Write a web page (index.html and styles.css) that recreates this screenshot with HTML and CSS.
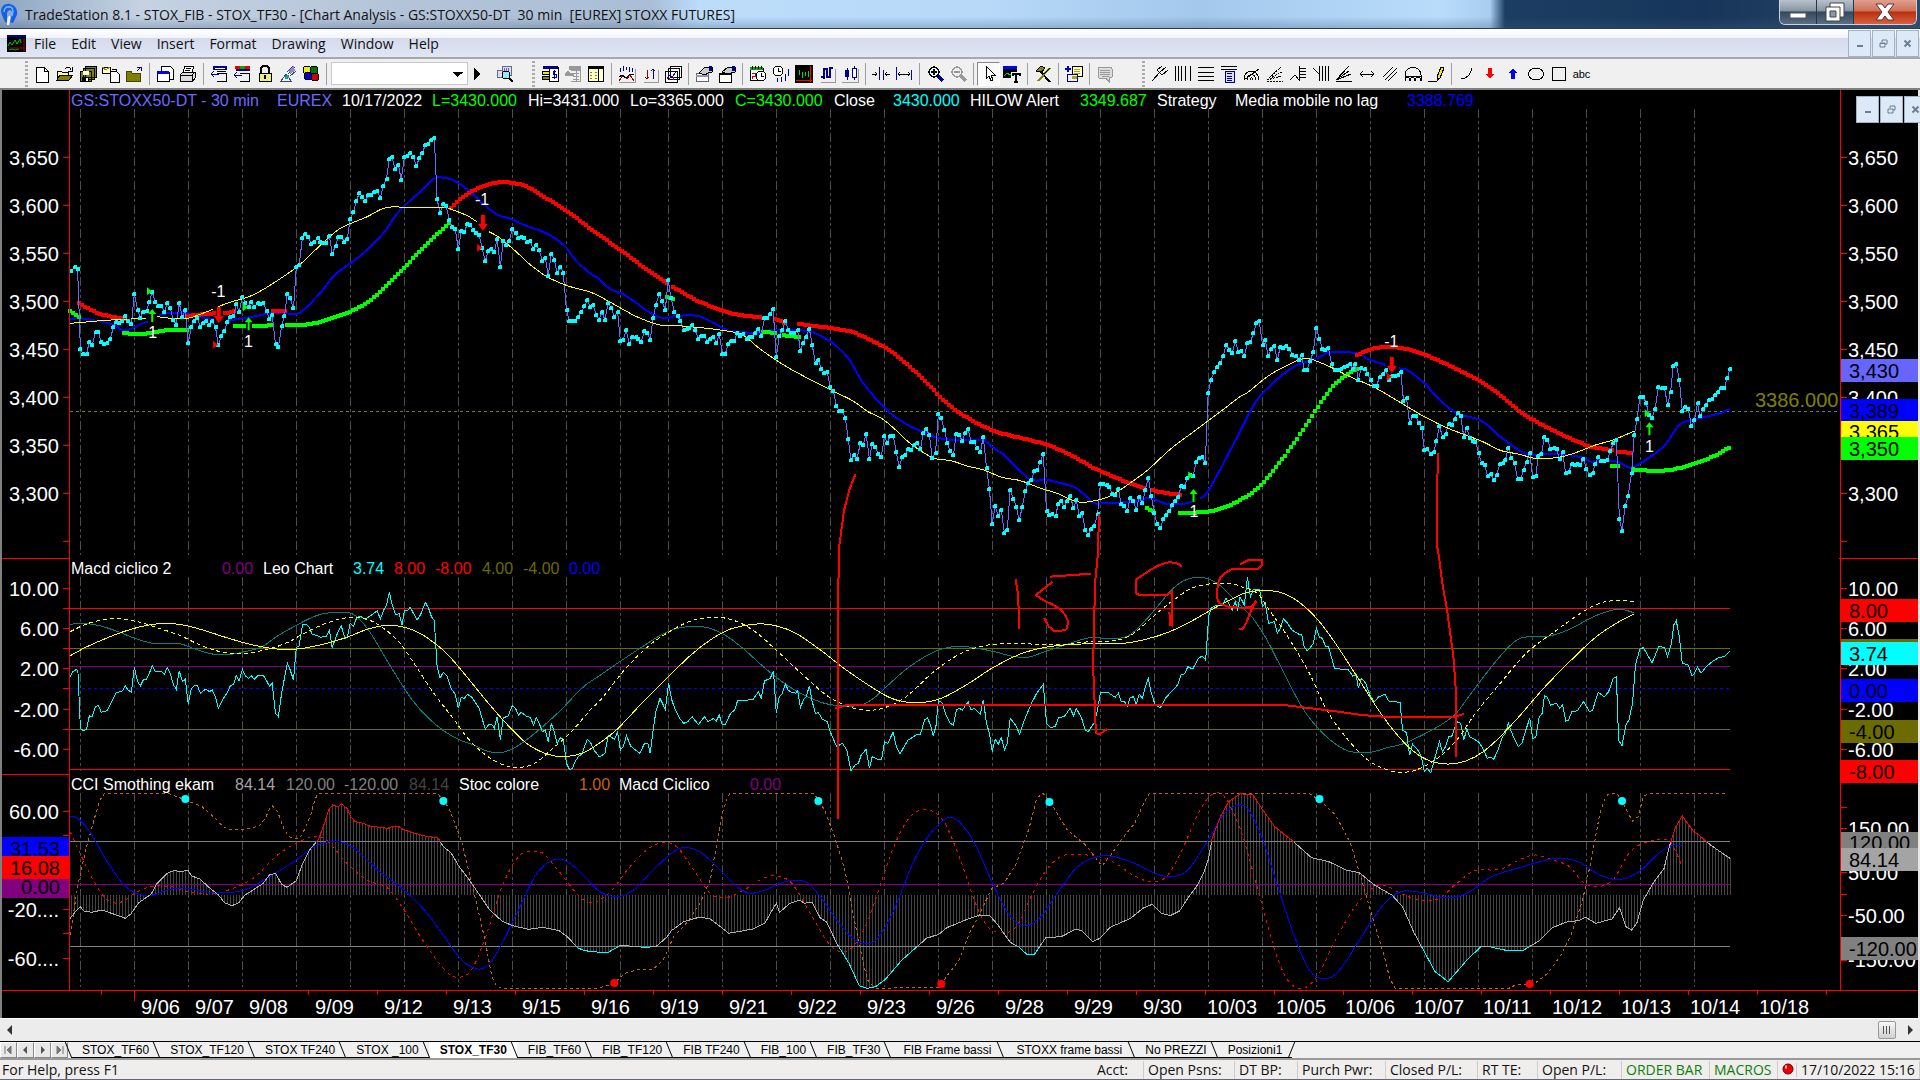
FILE: index.html
```html
<!DOCTYPE html>
<html lang="en">
<head>
<meta charset="utf-8">
<title>TradeStation 8.1 - STOX_FIB - STOX_TF30</title>
<link rel="stylesheet" href="styles.css">
</head>
<body>
<header class="titlebar">
  <svg class="logo" viewBox="0 0 18 26"><path d="M2 14C-1 7 4 2 10 3c6 1 9 8 6 13l-3 6-4-1 3-7c1-5-3-7-5-2v5l1 5-3-1z" fill="#1560e8"/><path d="M4 11c0-4 3-6 6-5M8 6c5-1 6 4 4 9" stroke="#6db6ff" stroke-width="1.500" fill="none"/><path d="M7 24c0-5 0-8 2-9s2 3 0 9z" fill="#eef6ff"/></svg>
  <h1 class="title">TradeStation 8.1 - STOX_FIB - STOX_TF30 - [Chart Analysis - GS:STOXX50-DT&nbsp; 30 min&nbsp; [EUREX] STOXX FUTURES]</h1>
  <div class="winbtns">
    <button class="wb" aria-label="Minimize"><svg width="18" height="16"><rect x="1" y="9" width="16" height="5" fill="#fff" stroke="#555"/></svg></button>
    <button class="wb" aria-label="Restore"><svg width="20" height="20"><path d="M5 1h14v14H5z" fill="#fff" stroke="#444"/><path d="M1 5h14v14H1z" fill="#fff" stroke="#444"/><path d="M5 9h6v6H5z" fill="#8a98a8" stroke="#444"/></svg></button>
    <button class="wb close" aria-label="Close"><svg width="20" height="18"><path d="M1 1h6l3 4 3-4h6l-6 8 6 8h-6l-3-4-3 4H1l6-8z" fill="#fff" stroke="#5a3030"/></svg></button>
  </div>
</header>
<nav class="menubar">
  <svg class="doc-icon" viewBox="0 0 19 17"><path fill="#000" d="M0 0h19v17H0z"/><path fill="#0000a8" d="M0 0h19v2H0z"/><path d="M1 11l2-4 2 3 3-5 2 4 3-5 1 4" stroke="#0c0" fill="none"/><path d="M1 13h17M17 3v13" stroke="#a00"/><path d="M2 15l3-1 3 1 4-1" stroke="#0a0" fill="none"/></svg>
  <a href="#">File</a><a href="#">Edit</a><a href="#">View</a><a href="#">Insert</a><a href="#">Format</a><a href="#">Drawing</a><a href="#">Window</a><a href="#">Help</a>
  <div class="mdi">
    <button aria-label="Minimize chart"><svg width="9" height="9"><path d="M2 7h6" stroke="#6b7f94" stroke-width="2"/></svg></button>
    <button aria-label="Restore chart"><svg width="9" height="9"><path d="M3 3V1h5v4H6M1 4h5v4H1zM1 4.500h5" stroke="#6b7f94" fill="none"/></svg></button>
    <button aria-label="Close chart"><svg width="9" height="9"><path d="M1.500 1.500l6 6m0-6l-6 6" stroke="#6b7f94" stroke-width="2"/></svg></button>
  </div>
</nav>
<div class="toolbar">
  <i class="grip"></i>
  <button aria-label="New"><svg><path d="M3 2h8l4 4v11H3z" fill="#fff" stroke="#000"/><path d="M11 2v4h4" fill="none" stroke="#000"/></svg></button>
  <button aria-label="Open"><svg><path d="M1 15V6h4l1 1h6v3" fill="#ff9" stroke="#000"/><path d="M1 15l3-5h13l-4 5z" fill="#808000" stroke="#000"/><path d="M9 4c2-3 5-2 6 1m1-3v4h-4" fill="none" stroke="#000"/></svg></button>
  <button aria-label="Save all"><svg><path d="M6 1h11v11H6zM4 3h11v11H4zM1 6h11v10H1z" fill="#808000" stroke="#000"/><path fill="#fff" d="M4 6h6v4H4z"/><path fill="#000" d="M3 12h7v4H3z"/><path fill="#fff" d="M7 13h2v3H7z"/></svg></button>
  <button aria-label="Import"><svg><path d="M8 6h6l3 3v8H8z" fill="#fff" stroke="#000"/><path d="M0 2h8v6H0z" fill="#ffc" stroke="#000"/><path d="M0 2l4 3 4-3" fill="none" stroke="#880"/><path d="M10 4h4v3" fill="none" stroke="#000"/></svg></button>
  <button aria-label="Close workspace"><svg><path d="M1 6h5l1 2h8v8H1z" fill="#808000" stroke="#440"/><path d="M12 6l4-4m-4 0h4v4" fill="none" stroke="#008"/></svg></button>
  <i class="sep"></i>
  <button aria-label="Window list"><svg><path d="M5 1h9l3 3v10H5z" fill="#fff" stroke="#000"/><path d="M1 7h12v9H1z" fill="#fff" stroke="#000"/><path fill="#00f" d="M1 6h12v3H1z"/></svg></button>
  <button aria-label="Print"><svg><path d="M6 1h9l-2 6H4z" fill="#fff" stroke="#000"/><path d="M1 10l3-3h12v6l-2 3H1z" fill="#ddd" stroke="#000"/><path d="M1 10h12v6M13 10l3-3M7 3h5M6 5h5" fill="none" stroke="#000"/></svg></button>
  <i class="sep"></i>
  <button aria-label="Insert analysis"><svg><path fill="#008" d="M3 1h14v4H3z"/><path fill="#fff" d="M5 3h10v1H5z"/><path d="M7 8h9v8H7M7 6l9 1" fill="none" stroke="#000"/><path d="M1 9h8M1 9l3-3M1 9l3 3" stroke="#008" fill="none"/></svg></button>
  <button aria-label="Insert strategy"><svg><path fill="#e00" d="M2 1h5v3H2z"/><path fill="#0a0" d="M7 1h5v3H7z"/><path fill="#e00" d="M12 1h5v3h-5z"/><path fill="#008" d="M3 4h14v2H3z"/><path d="M7 8h9v8H7" fill="none" stroke="#000"/><path d="M1 10h8M1 10l3-3M1 10l3 3" stroke="#008" fill="none"/></svg></button>
  <button aria-label="Lock"><svg><path d="M5 8V4c0-4 8-4 8 0v4" fill="none" stroke="#000" stroke-width="2"/><path d="M3 8h12v8H3z" fill="#ee8" stroke="#000"/><path fill="#000" d="M8 10h2v4H8z"/></svg></button>
  <button aria-label="Data feed"><svg><path d="M2 16l5-7 5 7zM16 2L9 9M14 1l-6 6M17 6l-6 5" fill="none" stroke="#446"/><path fill="#88c" d="M10 5l5-4 1 5-5 3z"/><circle cx="8" cy="12" r="2" fill="#0a8"/></svg></button>
  <button aria-label="Development"><svg><circle cx="5" cy="5" r="4" fill="#ee0" stroke="#000"/><circle cx="12" cy="5" r="4" fill="#070" stroke="#000"/><circle cx="6" cy="11" r="4" fill="#00c" stroke="#000"/><circle cx="13" cy="12" r="4" fill="#c00" stroke="#000"/></svg></button>
  <i class="sep"></i>
  <select class="symbol" aria-label="Symbol"><option></option></select>
  <button class="go" aria-label="Go"><svg><path d="M6 3l6 6-6 6z" fill="#000"/></svg></button>
  <button class="find" aria-label="Symbol lookup"><svg><path d="M1 5h5v7H1zM6 1h9v9H6z" fill="#dde" stroke="#669"/><path d="M8 3v5m2-5v5m2-5v5" stroke="#669"/><circle cx="10" cy="10" r="4" fill="#8ef" stroke="#000"/><path d="M13 13l4 4" stroke="#000" stroke-width="2"/></svg></button>
  <i class="grip grip-b"></i>
  <button aria-label="Trade bar"><svg><path d="M2 2h15v14H8V2" fill="#fff" stroke="#000"/><path fill="#008" d="M2 1h15v3H2z"/><ellipse cx="5" cy="8" rx="4" ry="2" fill="#ee0" stroke="#000"/><ellipse cx="5" cy="13" rx="4" ry="2" fill="#880" stroke="#000"/><path d="M15 6h-3v3h3v3h-4m2-7v9" fill="none" stroke="#00a"/></svg></button>
  <button aria-label="Order list"><svg><path fill="#999" d="M5 1h12v4H5zM1 8l3-3 2 3h4v3H1z"/><path d="M7 5h9v11H7M9 8h6m-6 3h6m-6 3h6M12 5v11" fill="none" stroke="#999"/></svg></button>
  <button aria-label="Account manager"><svg><path d="M1 3h15v13H1z" fill="#ffc" stroke="#000"/><path fill="#000" d="M1 1h16v3H1zM11 4h1v12h-1z"/><path d="M3 7h2m-2 3h2m-2 3h2m3-6h2m-2 3h2m-2 3h2" stroke="#880"/></svg></button>
  <i class="sep"></i>
  <button aria-label="Analysis technique"><svg><path d="M1 16l4-6 4 4 3-4 4 6" fill="none" stroke="#900"/><path d="M1 12l3-2 4 3 4-4 4 1" fill="none" stroke="#000"/><path d="M2 7V3m3 3V1m3 4V2m3 5V2m3 5V3" stroke="#009"/><path d="M1 17h16V4" fill="none" stroke="#999"/></svg></button>
  <button aria-label="Strategy"><svg><path d="M6 5v9m-2-2l2 2 2-2" fill="none" stroke="#900"/><path d="M12 14V4m-2 2l2-2 2 2" fill="none" stroke="#009"/><path d="M3 17h14V5" fill="none" stroke="#999"/></svg></button>
  <button aria-label="Workspace"><svg><path d="M6 1h11v11H6zM4 3h11v11H4zM1 6h12v11H1z" fill="#fff" stroke="#000"/><path d="M3 14l3-4 2 2 4-5" stroke="#00c" fill="none"/><path d="M5 15v-2m4 2v-3" stroke="#c00"/></svg></button>
  <i class="sep"></i>
  <button aria-label="Format window"><svg><path d="M1 8h12v8H1z" fill="#fff" stroke="#667"/><path fill="#99a" d="M1 10h12v2H1z"/><path d="M4 8l6-6h7v5l-4 1-3 2z" fill="#ccc" stroke="#000"/><path fill="#008" d="M14 1h3v5h-3z"/></svg></button>
  <button aria-label="Format symbol"><svg><path d="M1 8h12v9H1z" fill="#fff" stroke="#000"/><path fill="#000" d="M1 8h12v2H1z"/><path d="M4 7l6-5h7v5l-4 1-3 1z" fill="#ccc" stroke="#000"/><path fill="#008" d="M14 1h3v5h-3z"/></svg></button>
  <i class="sep"></i>
  <button aria-label="Calendar"><svg><path d="M1 3h13v12H1z" fill="#fff" stroke="#000"/><path fill="#0a0" d="M1 2h13v3H1z"/><path d="M3 1v3m3-3v3m3-3v3m3-3v3" stroke="#000"/><circle cx="12" cy="11" r="5" fill="#fff" stroke="#000"/><path d="M12 8v3h3" fill="none" stroke="#000"/><path d="M3 8h3v3H3v3" stroke="#c00" fill="none"/></svg></button>
  <button aria-label="Bar interval"><svg><circle cx="6" cy="6" r="5" fill="#fff" stroke="#000"/><path d="M6 3v3h3" fill="none" stroke="#000"/><path d="M5.500 13v4m4-5v5m4-8v7m3-12v7" stroke="#009"/></svg></button>
  <button aria-label="Chart"><svg><path fill="#000" d="M0 0h18v18H0z"/><path d="M4 5v5m3-3v6m3-6v4m3-5v6" stroke="#0d0"/><path d="M1 15h16M15.500 1v16" stroke="#f00"/></svg></button>
  <button aria-label="Bar chart"><svg><path d="M3 12h3V4h3v8h3V3h3M6 12v2m6-11v10" fill="none" stroke="#008" stroke-width="1.500"/><path d="M3 17h14V4" fill="none" stroke="#999"/></svg></button>
  <button aria-label="Candlestick"><svg><path d="M6 3v12m7-14v14" stroke="#008"/><path d="M4 5h4v7H4z" fill="#008"/><path d="M11 3h4v9h-4z" fill="#fff" stroke="#008"/><path d="M1 17h16V4" fill="none" stroke="#999"/></svg></button>
  <i class="sep"></i>
  <button aria-label="Decrease spacing"><svg><path d="M7.500 2v13m4-10v10" stroke="#00c"/><path d="M0 9h5m-2-2l2 2-2 2m15-2h-5m2-2l-2 2 2 2" stroke="#000" fill="none"/></svg></button>
  <button aria-label="Increase spacing"><svg><path d="M1.500 2v13m15-10v10" stroke="#00c"/><path d="M3 9h12M5 7L3 9l2 2m8-4l2 2-2 2" stroke="#000" fill="none"/></svg></button>
  <i class="sep"></i>
  <button aria-label="Zoom in"><svg><circle cx="8" cy="7" r="5" fill="#dff" stroke="#000" stroke-width="1.500"/><path d="M12 11l5 5" stroke="#008" stroke-width="3"/><path d="M5 7h6M8 4v6" stroke="#000" stroke-width="2"/></svg></button>
  <button aria-label="Zoom out"><svg><circle cx="8" cy="7" r="5" fill="#eee" stroke="#999" stroke-width="1.500"/><path d="M12 11l5 5" stroke="#999" stroke-width="3"/><path d="M5 7h6" stroke="#999" stroke-width="2"/></svg></button>
  <i class="sep"></i>
  <button class="pressed" aria-label="Pointer"><svg><path d="M6 1v13l3-3 2 5 2-1-2-5h4z" fill="#fff" stroke="#000"/></svg></button>
  <button aria-label="Chart text"><svg><path fill="#000" d="M0 1h14v12H0z"/><path fill="#00f" d="M0 1h14v3H0z"/><path d="M1 11l3-3 3 2 3-2" stroke="#0d0" fill="none"/><path fill="#f0f0f0" d="M8 7h10v11H8z"/><path d="M9 9h8M13 9v8m-2 0h4M9.500 8v3m7-3v3" stroke="#000" stroke-width="2" fill="none"/></svg></button>
  <i class="sep"></i>
  <button aria-label="Customize"><svg><path d="M2 6l5-5 4 2-3 4z" fill="#880" stroke="#000"/><path d="M6 6l10 11" stroke="#000" stroke-width="2"/><path d="M16 3L4 16" stroke="#880" stroke-width="2"/><path d="M16 3l-6 6" stroke="#000"/></svg></button>
  <i class="sep"></i>
  <button aria-label="Add bars"><svg><path d="M7 1h10v10H7z" fill="#ffd" stroke="#000"/><path d="M9 4h6m-6 2h6m-6 2h6" stroke="#aa0"/><path d="M2 9h10v7H2z" fill="#eef" stroke="#008"/><path d="M0 4h6M3 1v6" stroke="#00c" stroke-width="2"/><path fill="#aa0" d="M7 11h5v3H7z"/></svg></button>
  <i class="sep"></i>
  <button aria-label="Comment"><svg><path d="M2 2h13l1 2v8l-3 1v4l-3-4H3l-1-2z" fill="#ddd" stroke="#999"/><path d="M4 5h10M4 7h10M4 9h10M6 11h7" stroke="#999"/></svg></button>
  <i class="grip grip-c"></i>
  <button aria-label="Pitchfork"><svg><path d="M1 16l8-9M6 5l5 5m-5-5l5-4m0 9l6-5M9 7l6-5" fill="none" stroke="#000"/></svg></button>
  <button aria-label="Time cycles"><svg><path d="M1.500 1v15m3-15v15m3-15v15m4-15v15m5-15v15" stroke="#000"/></svg></button>
  <button aria-label="Levels"><svg><path d="M1 2.500h16M1 7.500h16M1 11.500h16M1 15.500h16" stroke="#000"/></svg></button>
  <button aria-label="Calculator"><svg><path d="M1 1.500h16M1 4.500h16" stroke="#000"/><path d="M5 6h9v11H5z" fill="#dde" stroke="#008"/><path d="M7 8h5m-5 3h5m-5 2h5m-5 2h5" stroke="#008"/></svg></button>
  <button aria-label="Arcs"><svg><path d="M1 15c0-12 14-12 15 0M4 15c0-7 8-7 9 0M7 15c0-3 3-3 3 0M1 15L16 4" fill="none" stroke="#000"/></svg></button>
  <button aria-label="Fan lines"><svg><path d="M1 16h16M1 15L15 2M1 15l15-8M1 15l15-4" fill="none" stroke="#000" stroke-dasharray="2 1"/></svg></button>
  <button aria-label="Retracement"><svg><path d="M1 15l5-5 4 5V1M11 3.500h6m-6 3h6m-6 3h6m-6 3h6" fill="none" stroke="#000"/></svg></button>
  <button aria-label="Time retracement"><svg><path d="M1 3l6 6V1m3 0v15m3-15v15m3-15v15M7 9v7" fill="none" stroke="#000"/></svg></button>
  <button aria-label="Speed lines"><svg><path d="M1 16h16M1 15L14 1M1 15l13-9M1 15l15-6" fill="none" stroke="#000"/></svg></button>
  <button aria-label="Horizontal line"><svg><path d="M2 9h14M5 6L2 9l3 3m8-6l3 3-3 3" fill="none" stroke="#000"/></svg></button>
  <button aria-label="Parallel lines"><svg><path d="M2 12L12 2M4 15L16 3M7 16L16 7" fill="none" stroke="#000"/></svg></button>
  <button aria-label="Cycle arcs"><svg><path d="M1 16v-6c0-10 16-10 16 0v6M1 11h16M1 16c0-5 5-5 5 0 0-5 5-5 5 0 0-5 6-5 6 0" fill="none" stroke="#000"/></svg></button>
  <button aria-label="Pencil"><svg><path d="M10 12l4-10 3 1-4 10-3 2z" fill="#ee0" stroke="#000"/><path d="M1 16h9l2-3" fill="none" stroke="#000"/></svg></button>
  <i class="sep"></i>
  <button aria-label="Arc"><svg><path d="M3 14c6 0 10-5 11-11" fill="none" stroke="#000"/></svg></button>
  <button aria-label="Down arrow"><svg><path d="M7 3h4v6h2l-4 5-4-5h2z" fill="#f00"/></svg></button>
  <button aria-label="Up arrow"><svg><path d="M7 14h4V8h2L9 3 5 8h2z" fill="#00f"/></svg></button>
  <button aria-label="Ellipse"><svg><ellipse cx="9" cy="9" rx="7.500" ry="6" fill="none" stroke="#000"/></svg></button>
  <button aria-label="Rectangle"><svg><path d="M2.500 2.500h13v13h-13z" fill="none" stroke="#000"/></svg></button>
  <button class="abc">abc</button>
</div>
<main class="chart">
  <svg id="plot" viewBox="0 90 1920 928" role="img" aria-label="Price chart with MACD and CCI panes"></svg>
  <div class="mdi chart-mdi">
    <button aria-label="Minimize pane"><svg width="9" height="9"><path d="M2 7h6" stroke="#6b7f94" stroke-width="2"/></svg></button>
    <button aria-label="Restore pane"><svg width="9" height="9"><path d="M3 3V1h5v4H6M1 4h5v4H1z" stroke="#6b7f94" fill="none"/></svg></button>
    <button aria-label="Close pane"><svg width="9" height="9"><path d="M1.500 1.500l6 6m0-6l-6 6" stroke="#6b7f94" stroke-width="2"/></svg></button>
  </div>
</main>
<div class="scroll">
  <button aria-label="Scroll left"><svg width="6" height="10"><path d="M5 0v10L0 5z" fill="#333"/></svg></button>
  <span class="track"><span class="thumb"></span></span>
  <button aria-label="Scroll right"><svg width="6" height="10"><path d="M1 0v10l5-5z" fill="#333"/></svg></button>
</div>
<nav class="tabs">
  <div class="tabnav">
    <button aria-label="First"><svg width="9" height="8"><path d="M1 0v8M7 0v8L3 4z" stroke="#777" fill="#777"/></svg></button>
    <button aria-label="Previous"><svg width="9" height="8"><path d="M6 0v8L2 4z" fill="#555"/></svg></button>
    <button aria-label="Next"><svg width="9" height="8"><path d="M3 0v8l4-4z" fill="#555"/></svg></button>
    <button aria-label="Last"><svg width="9" height="8"><path d="M8 0v8M2 0v8l4-4z" stroke="#777" fill="#777"/></svg></button>
  </div>
  <a href="#">STOX_TF60</a><a href="#">STOX_TF120</a><a href="#">STOX TF240</a><a href="#">STOX _100</a><a href="#" class="active">STOX_TF30</a><a href="#">FIB_TF60</a><a href="#">FIB_TF120</a><a href="#">FIB TF240</a><a href="#">FIB_100</a><a href="#">FIB_TF30</a><a href="#" class="long">FIB Frame bassi</a><a href="#" class="long">STOXX frame bassi</a><a href="#">No PREZZI</a><a href="#">Posizioni1</a>
</nav>
<footer class="status">
  <span class="help">For Help, press F1</span>
  <span>Acct:</span><span>Open Psns:</span><span>DT BP:</span><span>Purch Pwr:</span><span>Closed P/L:</span><span>RT TE:</span><span>Open P/L:</span><span class="on">ORDER BAR</span><span class="on">MACROS</span>
  <span><svg width="12" height="14"><ellipse cx="6" cy="6" rx="5" ry="5" fill="#e00" stroke="#600"/><ellipse cx="4" cy="4" rx="1" ry="2" fill="#fbb"/></svg></span>
  <span>17/10/2022 15:16</span>
</footer>
<script src="chart.js"></script>
</body>
</html>
```
FILE: styles.css
```css
* { box-sizing: border-box; }
body { margin: 0; background: #f0f0f0; font-family: "Open Sans", "Noto Sans", sans-serif; font-size: 14px; color: #111; }
button { font: inherit; padding: 0; border: 0; background: none; display: flex; align-items: center; justify-content: center; }
a { color: inherit; text-decoration: none; }

.titlebar { height: 29px; display: flex; align-items: center; border-bottom: 1px solid #333c48;
  background:
    linear-gradient(to bottom, transparent 60%, rgba(60, 90, 130, .3)),
    linear-gradient(to right, #8ea6c3 0, #c4d2e2 140px, #b4c4d8 400px, #a9bed6 650px, #bcdcfa 700px, #b8d9f8 980px, #a3c8ec 1200px, #b9dcfb 1440px, #a8cdf0 1490px, #1c3e62 1505px, #17355a 1700px, #2a4a6a 1920px); }
.logo { width: 18px; height: 26px; margin-right: 7px; }
.title { margin: 0; flex: 1; font-size: 14px; font-weight: 400; line-height: 20px; white-space: nowrap; padding-top: 1px; }
.winbtns { display: flex; align-self: flex-start; height: 25px; margin-right: 3px; border: 1px solid #c9d4df; border-top: 0; border-radius: 0 0 6px 6px; overflow: hidden; }
.wb { width: 37px; background: linear-gradient(#b9c2cc, #8795a3 45%, #34485c 50%, #5a6f84); border-right: 1px solid #26364a; }
.wb.close { width: 62px; border-right: 0; background: linear-gradient(#e0a090, #d07058 45%, #b83010 50%, #d86040); }

.menubar { height: 30px; display: flex; align-items: center; padding: 0 1px 0 7px; border-bottom: 2px solid #a8a8a8;
  background: linear-gradient(#fff, #f3f5fb 30%, #d5dbec 34%, #e0e6f5); }
.doc-icon { width: 19px; height: 17px; margin-right: 8px; }
.menubar a { margin-right: 15px; }
.mdi { display: flex; }
.mdi button { width: 23px; height: 27px; background: #dce9f7; border: 1px solid #a3b2c4; }
.menubar .mdi { margin-left: auto; gap: 1px; }

.toolbar { height: 31px; display: flex; align-items: center; padding-left: 25px; border-bottom: 2px solid #808080; background: #f0f0f0; }
.toolbar button { flex: none; width: 23px; height: 24px; }
.toolbar svg { width: 18px; height: 18px; shape-rendering: crispEdges; }
.grip { flex: none; width: 3px; height: 26px; margin-right: 2px; background: repeating-linear-gradient(#aaa 0 2px, transparent 2px 4px); }
.grip-b { margin-left: 16px; margin-right: 3px; }
.grip-c { margin-left: 26px; margin-right: 3px; }
.sep { flex: none; width: 1px; height: 22px; margin: 0 3px 0 4px; background: #a0a0a0; }
.symbol { flex: none; width: 137px; height: 23px; margin-left: 1px; border: 1px solid #c8c8c8; border-radius: 0; appearance: none;
  background: conic-gradient(from -45deg at 50% 100%, #000 90deg, #fff 0) no-repeat 121px 9px / 10px 5px, #fff; }
.toolbar .go { width: 16px; }
.toolbar .find { margin-left: 9px; }
.toolbar .pressed { background: #fafafa; border: 1px solid; border-color: #888 #fff #fff #888; }
.toolbar .abc { font-family: "Liberation Sans", Arial, sans-serif; font-size: 11px; }

.chart { position: relative; background: #000; border-bottom: 1px solid #fff; overflow: hidden; }
.chart > svg { display: block; width: 100%; font-family: "Liberation Sans", Arial, sans-serif; }
.chart-mdi { position: absolute; top: 6px; right: -7px; gap: 1px; }

.scroll { height: 22px; display: flex; align-items: center; background: #ececec; }
.scroll button { width: 20px; height: 20px; }
.track { flex: 1; display: flex; justify-content: flex-end; }
.thumb { width: 18px; height: 18px; margin-right: 4px; border: 1px solid #999; border-radius: 2px; background: repeating-linear-gradient(to right, #555 0 1px, transparent 1px 3px) no-repeat 4px 4px / 8px 8px, linear-gradient(#f8f8f8, #d0d0d0); }

.tabs { height: 19px; display: flex; border-top: 1px solid #000; border-bottom: 2px solid #999; background: #f0f0f0;
  font-family: "Liberation Sans", Arial, sans-serif; font-size: 12px; line-height: 16px; color: #000; }
.tabnav { display: flex; width: 68px; margin-right: 3px; }
.tabnav button { flex: 1; height: 16px; background: #e8e8e8; border: 1px solid; border-color: #fff #888 #888 #fff; }
.tabs a { position: relative; padding: 0 10px 0 11px; border-bottom: 1px solid #000; white-space: nowrap; }
.tabs a::before, .tabs a:last-child::after { content: ""; position: absolute; top: 0; left: -3px; width: 1px; height: 16px; background: #000; transform: skewX(22deg); }
.tabs a:last-child::after { left: auto; right: 0; transform: skewX(-22deg); }
.tabs a.active { background: #fff; font-weight: 700; border-bottom-color: #fff; }
.tabs a.long { padding: 0 12px 0 13px; }

.status { height: 20px; display: grid; grid-template-columns: 1fr 51px 91px 63px 88px 92px 60px 84px 88px 68px 19px 123px; align-items: center; line-height: 18px; background: #f0eded; border-bottom: 1px solid #667; }
.status span { padding-left: 4px; border-right: 1px solid #ccc; white-space: nowrap; }
.status .help { padding-left: 2px; border-right: 0; }
.status .on { color: #0a800a; }
.status svg { display: block; }
```
FILE: chart.js
```js
const svg = document.getElementById('plot');
const NS = 'http://www.w3.org/2000/svg';

function add(tag, attrs, text) {
  const el = document.createElementNS(NS, tag);
  for (const k in attrs) el.setAttribute(k, attrs[k]);
  if (text !== undefined) el.textContent = text;
  svg.appendChild(el);
  return el;
}
const line = (x1, y1, x2, y2, stroke, extra) => add('path', Object.assign({ d: `M${x1} ${y1}L${x2} ${y2}`, stroke, fill: 'none' }, extra));
const text = (x, y, t, fill, size = 20, anchor = 'start') => add('text', { x, y, fill, 'font-size': size, 'text-anchor': anchor }, t);
const crisp = { 'shape-rendering': 'crispEdges' };

// Each block of samples has its own origin and resolution.
const blocks = {
  A: [0, 120, 2.45], B: [600, 120, 2.45], C: [1240, 120, 2.306],
  D: [0, 550, 2.45], E: [600, 550, 2.45], F: [1240, 550, 2.306]
};
// "A x,y x,y | x,y B x,y": a letter picks the block, a bar lifts the pen.
function parse(src) {
  const runs = [[]];
  let b = blocks.A;
  for (const t of src.trim().split(/\s+/)) {
    if (t === '|') runs.push([]);
    else if (blocks[t]) b = blocks[t];
    else {
      const [x, y] = t.split(',').map(Number);
      runs[runs.length - 1].push([b[0] + x / b[2], b[1] + y / 3]);
    }
  }
  return runs;
}
const f = n => n.toFixed(1);
function straight(runs) {
  return runs.map(r => 'M' + r.map(p => f(p[0]) + ' ' + f(p[1])).join('L')).join('');
}
function slopes(r, i) {
  const p0 = r[i - 1] || r[i], p1 = r[i], p2 = r[i + 1], p3 = r[i + 2] || p2;
  return [(p2[1] - p0[1]) / ((p2[0] - p0[0]) || 1), (p3[1] - p1[1]) / ((p3[0] - p1[0]) || 1)];
}
function smooth(runs) {
  return runs.map(r => {
    let d = `M${f(r[0][0])} ${f(r[0][1])}`;
    for (let i = 0; i < r.length - 1; i++) {
      const p1 = r[i], p2 = r[i + 1];
      const dx = (p2[0] - p1[0]) / 3;
      const [m1, m2] = slopes(r, i);
      d += `C${f(p1[0] + dx)} ${f(p1[1] + m1 * dx)} ${f(p2[0] - dx)} ${f(p2[1] - m2 * dx)} ${f(p2[0])} ${f(p2[1])}`;
    }
    return d;
  }).join('');
}
function yAt(run, x) {
  for (let i = 1; i < run.length; i++) {
    if (x <= run[i][0]) {
      const a = run[i - 1], b = run[i];
      return a[1] + (b[1] - a[1]) * (x - a[0]) / ((b[0] - a[0]) || 1);
    }
  }
  return run[run.length - 1][1];
}
const curve = (src, stroke, width, extra) => add('path', Object.assign({ d: smooth(parse(src)), stroke, 'stroke-width': width, fill: 'none' }, extra));

// One square block per bar along a smoothed series.
function stepped(src, fill) {
  let d = '';
  for (const r of parse(src)) {
    if (r.length < 2) continue;
    for (let i = 0, x = Math.round(r[0][0]); x <= r[r.length - 1][0] + 1; x += 3) {
      while (i < r.length - 2 && x > r[i + 1][0]) i++;
      const [x1, y1] = r[i], [x2, y2] = r[i + 1], h = x2 - x1, t = Math.min(1, Math.max(0, (x - x1) / h));
      const [m1, m2] = slopes(r, i), t2 = t * t, t3 = t2 * t;
      const y = (2 * t3 - 3 * t2 + 1) * y1 + (t3 - 2 * t2 + t) * h * m1 + (3 * t2 - 2 * t3) * y2 + (t3 - t2) * h * m2;
      d += `M${x - 2} ${Math.round(y) - 2}h4v4h-4z`;
    }
  }
  add('path', { d, fill, ...crisp });
}

const S = {};
S.price = `A 175,453 183,442 190,447 197,686 204,702 212,702 219,665 226,675 234,637 241,635 248,667 256,672 263,669 270,657 278,622 285,605 292,610 300,604 307,587 314,604 322,613 329,521 337,569 344,593 351,575 359,573 366,546 373,515 380,545 388,557 395,558 403,575 410,549 417,564 425,600 432,614 439,549 447,590 454,570 461,669 469,620 476,602 483,593 491,620 498,608 505,602 513,615 520,602 528,622 535,676 542,648 550,632 557,605 564,592 572,588 579,553 586,575 594,530 601,550 609,560 616,545 623,562 631,548 638,553 645,548 653,572 660,597 667,585 675,672 682,682 690,618 697,587 704,523 711,534 719,565 726,440 733,435 741,353 748,342 755,350 763,372 770,365 778,354 785,365 792,368 799,370 807,347 814,402 822,378 829,350 836,350 844,366 851,357 858,297 866,275 873,243 880,220 888,230 895,243 902,225 909,225 917,216 924,213 932,234 939,198 947,177 954,116 961,112 968,148 976,134 983,180 991,110 998,107 1005,99 1013,110 1020,138 1027,115 1035,99 1042,75 1049,73 1057,60 1064,53 1071,237 1078,279 1086,251 1093,257 1101,300 1108,322 1115,326 1123,387 1130,333 1138,336 1145,311 1152,315 1160,330 1167,338 1174,345 1181,383 1189,423 1196,393 1204,386 1211,396 1218,358 1226,441 1233,362 1240,375 1248,363 1255,328 1263,339 1270,355 1277,352 1285,354 1292,366 1299,364 1307,388 1314,374 1321,390 1329,423 1336,413 1343,467 1351,401 1358,420 1365,460 1373,440 1380,460 1388,570 1395,603 1402,603 1409,603 1417,590 1424,577 1432,558 1439,540 1446,562 1453,555 1461,585 1468,599 1475,575 1482,600 1490,549 1498,565 1505,590 1513,575 1520,663 1527,660
B 64,629 72,672 79,651 87,650 94,658 101,666 109,632 116,638 123,660 130,594 137,555 145,523 152,543 160,570 167,479 174,534 182,575 190,588 197,603 205,630 212,628 219,625 226,614 233,630 241,657 248,648 256,648 263,666 270,657 278,650 285,670 292,642 300,702 307,702 314,672 322,662 329,663 336,638 344,648 351,642 359,657 366,651 373,651 380,640 388,627 395,648 403,594 410,594 417,582 424,566 432,712 439,648 447,630 454,602 461,630 469,638 476,640 484,630 491,692 498,668 505,650 513,627 520,675 528,730 535,719 542,746 550,759 557,756 564,802 572,813 579,858 586,873 594,873 601,894 608,957 615,1020 623,1005 630,1017 638,968 645,974 652,941 660,1017 667,971 674,980 682,1002 689,1012 697,948 704,968 711,947 718,947 726,996 733,1041 740,1012 748,1006 755,986 763,990 770,974 777,968 785,987 792,940 799,927 807,945 814,1013 822,999 829,881 836,895 844,930 851,968 858,993 866,1005 873,941 880,945 888,963 895,938 902,927 909,966 917,966 924,984 932,996 939,950 947,1043 954,1106 961,1212 968,1158 976,1187 983,1169 991,1239 998,1230 1005,1109 1013,1137 1020,1160 1027,1200 1035,1160 1042,1112 1049,1089 1057,1080 1064,1052 1071,1050 1079,1026 1086,1001 1094,1173 1101,1186 1108,1182 1116,1188 1123,1151 1130,1142 1137,1161 1145,1142 1152,1127 1160,1164 1167,1140 1174,1187 1181,1178 1189,1230 1196,1245 1204,1227 1211,1217 1219,1182 1226,1091 1233,1091 1241,1094 1248,1101 1255,1121 1262,1125 1270,1106 1277,1153 1285,1158 1292,1173 1299,1133 1307,1142 1314,1170 1321,1131 1329,1149 1336,1109 1343,1073 1351,1128 1358,1179 1365,1212 1373,1224 1380,1197 1387,1186 1395,1173 1402,1155 1409,1143 1417,1131 1424,1097 1431,1101 1439,1074 1446,1065 1453,1068 1461,1025 1468,1013 1475,1010 1483,1029 1490,819 1497,779 1505,755 1512,741 1519,729 1527,708 1534,674 1542,689 1549,699 1556,664 1564,695
C 3,692 10,708 17,669 24,667 31,640 38,608 44,602 52,674 58,659 65,708 72,687 79,677 86,719 93,681 100,683 107,678 114,686 121,704 128,708 135,720 142,704 148,749 155,749 162,722 169,695 176,623 183,657 190,686 197,689 204,685 211,731 218,750 225,750 232,747 239,741 246,738 253,731 260,747 266,731 273,779 280,743 288,747 294,761 301,779 308,798 315,797 322,770 329,761 336,750 343,780 350,768 357,767 364,764 371,757 377,842 384,834 391,910 398,887 405,888 412,910 419,923 425,989 432,987 440,1002 447,996 453,963 460,919 467,950 474,941 481,911 488,914 495,896 502,879 509,889 516,950 523,923 530,954 537,963 543,965 550,998 557,1029 564,1036 571,1068 578,1062 585,1080 592,1065 599,1032 606,1029 612,1020 619,983 626,1013 633,1029 640,1077 647,1077 654,1050 661,1025 668,998 675,1072 682,1068 688,1007 695,1003 702,950 709,959 716,987 723,984 730,987 737,1018 744,995 751,1060 758,1056 765,1032 772,1035 778,1031 785,1034 792,1016 799,1046 806,1066 813,1058 819,1033 826,1010 833,1023 840,1023 847,1020 854,993 861,969 868,960 875,1197 881,1233 888,1158 895,1128 903,1058 909,946 916,896 922,831 930,831 937,850 943,885 950,895 957,868 965,800 972,803 979,805 986,855 993,815 999,739 1006,731 1013,779 1020,873 1027,862 1034,868 1041,917 1048,900 1055,850 1061,889 1068,868 1075,855 1082,839 1089,837 1096,825 1103,815 1110,803 1117,803 1124,773 1130,747`;
S.maYellow = `A 172,610 210,606 260,601 320,597 358,595 | 385,590 420,595 460,595 490,583 522,568 | 535,560 560,548 610,530 650,505 720,448 740,428 790,370 830,328 860,310 900,290 937,266 968,260 985,262 1090,262 1110,270 1145,287 1168,305 | 1198,335 1220,350 1260,390 1300,435 1340,470 1390,497 1450,518
B 30,550 90,590 150,616 200,618 300,631 350,645 390,685 450,735 520,782 570,813 620,843 655,874 690,895 720,925 760,970 815,1013 860,1022 900,1038 940,1050 985,1072 1030,1082 1080,1105 1120,1120 1150,1137 1180,1147 1220,1140 1250,1128 1300,1088 1340,1052 1400,985 1460,930 1520,875
C 0,830 15,820 65,768 110,735 145,716 165,718 210,742 250,768 310,802 360,840 425,890 480,925 560,965 600,991 645,1003 680,1015 730,1013 770,1000 820,975 860,960 910,933`;
S.maBlue = `A 172,598 195,595 225,600 260,608 280,615 300,630 320,627 345,612 362,605 | 390,586 415,579 460,580 490,590 525,598 | 553,602 590,596 630,588 670,578 715,581 735,578 770,538 795,503 820,465 860,428 885,405 920,365 945,330 970,285 1000,247 1035,210 1065,174 1090,174 1110,180 1150,213 1180,248 1220,285 1250,296 1290,318 1330,335 1360,355 1385,380 1410,420 1440,455 1465,475
B 25,507 60,525 90,550 125,580 160,595 185,588 240,588 280,610 310,630 345,636 395,639 420,630 480,630 520,636 550,654 570,668 610,718 640,780 670,828 705,872 730,897 765,922 800,940 825,953 870,960 940,961 965,985 990,1005 1015,1035 1050,1075 1070,1082 1090,1078 1120,1087 1160,1100 1185,1122 1210,1149 1240,1149 1310,1145 1330,1137 1350,1135 1390,1152 1430,1151 1450,1145 | 1470,1136 1485,1122 1510,1070 1540,1000
C 0,935 25,870 45,830 75,790 120,743 150,726 180,713 205,698 270,700 300,720 337,735 | 367,745 385,750 425,790 455,833 500,880 550,898 580,925 600,950 655,1000 680,1005 715,1001 790,1012 810,1025 870,1025 900,1043 935,1020 980,975 1012,915 1030,904 1060,895 1085,887 1110,878 1130,867`;
S.hiRed = `A 193,549 215,565 250,583 302,596 | 458,588 522,580 | 552,579 575,574 | 670,573 702,573 | 1105,263 1140,225 1180,200 1215,188 1255,188 1290,200 1330,228 1400,282 1450,330
B 0,347 60,398 110,445 163,488 | 178,500 230,537 270,558 330,582 400,593 | 428,598 452,608 | 488,612 580,627 620,637 680,670 720,700 790,775 850,850 900,893 950,925 1000,945 1090,972 1150,1003 1220,1050 1310,1095 1337,1105 | 1355,1110 1385,1119 1420,1124 |
C 270,706 300,688 330,682 370,684 410,697 455,720 520,760 580,805 650,878 720,930 800,976 830,985 857,990 | 873,995 905,999`;
S.lowGreen = `A 172,573 193,590 | 303,638 340,643 375,637 410,630 460,630 | 575,618 597,618 | 622,618 670,616 | 702,616 740,615 780,607 830,588 870,568 910,538 950,493 990,443 1040,380 1103,305 |
B 163,530 177,538 | 400,635 430,640 | 450,645 487,652 | 1340,1165 1353,1172 | 1422,1179 1480,1176 1520,1167 C 0,1140 40,1105 90,1030 140,940 170,880 210,805 240,770 268,747 | 858,1038 870,1038 | 907,1048 965,1053 1020,1042 1090,1010 1132,980`;
S.leo = `D 172,380 178,365 188,358 191,370 197,535 204,542 212,538 219,497 226,500 234,470 241,466 248,487 263,482 278,443 285,428 300,423 307,408 314,420 322,427 329,352 337,395 344,407 351,390 359,387 366,370 373,346 380,364 395,364 403,372 410,352 417,370 425,405 432,418 439,362 447,395 454,388 461,462 469,415 476,408 483,405 491,430 498,422 505,417 513,425 520,420 528,440 535,475 545,450 557,428 564,408 572,403 579,377 586,392 594,358 601,378 609,385 616,377 623,388 631,378 645,376 653,392 660,408 667,400 675,490 682,500 690,430 704,340 711,360 719,390 726,292 733,287 741,225 750,222 757,230 765,253 775,256 785,262 800,258 807,240 814,293 822,265 829,243 836,227 845,265 851,262 858,220 866,230 873,206 882,198 895,208 910,195 924,182 932,207 940,180 947,165 954,127 961,165 970,195 978,190 985,225 991,180 1000,180 1005,172 1013,190 1022,210 1030,195 1042,157 1050,175 1057,200 1064,212 1071,350 1078,385 1086,367 1095,378 1105,415 1115,432 1123,475 1130,443 1138,445 1145,433 1155,440 1165,458 1174,475 1181,505 1189,537 1198,523 1206,525 1211,535 1218,500 1226,570 1233,502 1244,500 1255,467 1263,475 1270,495 1277,487 1292,500 1299,502 1307,525 1314,503 1321,520 1329,545 1336,540 1343,575 1351,520 1358,545 1365,580 1373,563 1380,568 1388,640 1395,658 1402,656 1409,635 1417,620 1427,610 1432,590 1439,568 1448,580 1455,600 1468,620
E 0,620 12,610 20,555 35,568 43,547 50,600 57,590 65,557 75,588 87,600 98,610 109,580 117,580 123,610 130,540 137,485 147,445 160,478 168,400 176,450 184,478 195,505 205,520 215,515 226,500 241,524 256,500 265,515 278,505 285,513 292,495 300,525 307,523 320,490 330,480 337,452 350,452 375,448 388,425 395,445 403,393 417,385 425,363 432,490 439,440 447,430 454,402 461,420 469,427 480,430 484,422 491,473 498,450 505,440 513,408 520,455 528,490 535,488 545,508 557,515 564,545 580,590 594,580 605,600 615,662 625,645 633,640 640,615 652,598 660,655 667,620 680,628 690,630 697,575 705,580 718,547 726,590 735,612 745,590 755,570 768,560 777,552 785,553 795,510 802,503 810,525 816,557 823,530 829,452 838,458 848,495 858,520 866,525 873,480 880,475 888,480 902,455 909,480 917,475 932,493 939,450 947,520 954,550 961,605 968,568 976,582 983,562 991,600 998,580 1005,505 1018,525 1028,552 1040,510 1057,460 1070,430 1086,403 1094,520 1105,533 1116,528 1123,503 1137,500 1152,475 1160,498 1167,475 1180,505 1189,540 1196,545 1210,520 1219,480 1226,428 1245,428 1262,442 1270,430 1277,455 1285,455 1292,468 1299,443 1307,440 1314,463 1321,433 1329,445 1336,410 1343,385 1350,425 1360,465 1373,473 1385,445 1400,425 1415,405 1424,374 1432,372 1440,350 1452,357 1465,327 1475,318 1484,330 1488,260 1491,200 1497,175 1510,165 1523,168 1534,145 1542,165 1549,180 1556,155 1562,178
F 0,140 10,165 17,82 24,140 31,118 45,118 52,170 58,160 66,220 79,215 86,250 93,235 100,207 107,215 120,240 135,252 142,253 148,290 155,303 162,293 169,280 176,235 183,262 190,265 197,288 204,290 218,355 250,360 260,378 268,375 273,415 280,385 290,400 301,440 310,455 320,440 335,433 343,453 369,457 375,540 384,548 391,615 398,583 410,600 418,620 425,665 432,655 440,668 447,635 460,575 467,605 474,590 481,560 488,560 500,515 509,520 516,570 523,537 530,560 550,575 560,595 570,625 578,622 585,628 595,600 605,560 612,550 619,520 630,560 642,590 650,580 658,545 668,505 675,565 682,562 690,500 697,490 702,437 709,442 716,465 730,460 737,475 744,465 751,513 758,510 765,485 778,482 792,455 806,485 813,480 826,427 840,440 850,425 861,385 868,380 873,570 881,587 890,525 897,510 905,460 912,345 922,297 930,293 940,315 950,338 958,315 965,290 979,292 986,320 995,280 1000,225 1006,212 1013,260 1020,340 1034,345 1042,378 1048,370 1055,350 1063,370 1075,350 1089,335 1105,322 1117,320 1130,303`;
S.teal = `D 172,223 200,220 240,226 290,245 330,265 375,280 440,281 480,298 525,313 570,312 610,302 640,292 680,258 720,230 775,197 820,187 860,190 885,213 910,253 940,315 980,395 1010,450 1050,505 1090,545 1130,572 1165,587 1190,602 1220,608 1250,600 1280,578 1320,540 1370,485 1430,410
E 0,376 40,342 100,293 150,255 190,235 235,229 270,235 310,258 350,295 400,350 430,380 460,407 500,435 550,460 600,468 640,465 670,445 700,412 750,358 800,317 840,296 880,289 920,294 970,306 1010,319 1050,321 1090,305 1140,285 1200,263 1250,266 1290,260 1320,232 1360,178 1400,120 1430,92 1460,82 1490,86 1520,107
F 0,165 30,205 60,265 90,340 140,465 170,520 210,572 250,603 300,607 340,593 375,582 410,562 450,535 480,510 500,488 530,435 580,350 620,290 650,263 710,259 760,238 810,203 850,183 880,178 908,188`;
S.macd = `D 172,317 210,292 260,265 310,242 360,226 410,220 460,228 510,245 560,265 620,285 670,296 720,298 780,286 850,262 900,238 950,226 1000,235 1040,258 1090,305 1130,360 1190,450 1240,520 1290,580 1340,612 1385,620 1430,608
E 0,578 40,540 100,463 160,390 220,318 270,270 320,237 385,222 430,227 480,250 540,300 600,357 660,407 710,443 750,456 795,457 840,443 900,403 960,355 1030,312 1100,290 1180,282 1280,280 1330,270 1390,248 1450,213 1500,178
F 0,135 20,126 60,121 100,130 140,160 180,210 220,280 270,380 330,500 380,580 420,622 460,640 500,640 540,622 580,585 640,505 700,415 760,335 820,262 870,218 908,193`;
S.macdDash = `D 172,245 210,223 250,210 290,206 340,216 390,235 440,256 490,285 540,305 590,311 640,302 700,280 750,247 810,215 860,202 900,208 940,235 980,280 1020,350 1060,425 1110,505 1150,570 1190,615 1230,643 1270,652 1310,640 1350,600 1400,545 1450,475
E 0,452 60,360 120,287 180,238 230,210 285,202 330,212 380,245 440,310 500,378 560,440 610,470 655,481 700,472 750,440 820,363 880,313 930,290 990,281 1080,283 1140,284 1180,277 1270,270 1310,248 1350,205 1400,155 1450,115 1500,101 1550,102
F 0,109 40,130 70,185 110,260 160,370 200,480 240,555 290,625 330,655 370,667 410,658 460,620 500,570 540,495 600,400 660,310 720,250 800,178 840,156 880,152 908,155`;
S.cci = `D 172,1105 185,1085 197,1070 205,1083 225,1087 250,1080 280,1093 307,1105 320,1093 340,1058 370,1033 385,1000 410,970 425,962 440,964 461,962 470,978 490,987 510,1010 535,1035 550,1058 568,1067 585,1058 600,1035 620,1020 645,1000 660,975 675,970 690,1003 703,1012 726,992 740,945 757,902 780,868 795,820 805,780 815,765 828,770 837,762 850,775 860,800 870,815 890,820 905,828 950,835 965,828 978,830 990,840 1040,858 1073,863 1086,890 1105,908 1125,950 1150,990 1175,1035 1200,1080 1230,1113 1255,1127 1295,1138 1330,1132 1370,1142 1390,1160 1415,1193 1432,1202
E 0,1207 20,1207 50,1186 110,1192 137,1190 165,1160 175,1142 205,1115 245,1101 270,1107 300,1135 315,1150 375,1137 405,1118 415,1095 432,1060 440,1087 465,1060 490,1050 500,1060 520,1057 540,1105 555,1115 580,1180 610,1240 635,1307 655,1315 675,1310 700,1287 740,1230 800,1165 830,1153 850,1133 900,1108 930,1095 955,1097 975,1125 1005,1177 1025,1190 1045,1212 1065,1212 1092,1163 1130,1160 1165,1138 1180,1142 1207,1175 1225,1165 1250,1132 1300,1105 1330,1075 1353,1063 1375,1090 1397,1097 1420,1083 1440,1045 1465,1003 1480,965 1490,930 1500,865 1520,800 1540,755
F 0,731 30,735 50,775 80,830 125,877 165,923 205,935 245,960 275,968 310,1005 350,1035 375,1070 400,1145 420,1193 450,1265 480,1295 520,1235 555,1190 575,1190 610,1200 655,1200 690,1172 720,1133 755,1115 780,1112 797,1102 820,1120 858,1107 875,1073 890,1130 903,1140 915,1120 930,1050 955,995 978,955 990,890 1005,830 1020,798 1045,843 1060,857 1085,885 1105,903 1130,925`;
S.cycBlue = `D 172,798 190,805 220,845 260,930 300,1000 330,1028 365,1038 410,1020 450,1014 500,1025 560,1028 610,1015 660,980 720,935 770,890 800,876 835,876 870,897 930,965 990,1020 1040,1080 1080,1145 1130,1228 1170,1257 1200,1240 1230,1180 1270,1080 1310,980 1340,940 1370,927 1400,943 1440,990
E 0,1025 40,1040 80,1022 130,960 180,905 210,892 250,910 310,980 340,1015 370,1030 410,1018 440,1000 480,990 510,1000 540,1040 580,1110 620,1165 650,1182 680,1165 720,1080 770,930 810,850 850,804 880,815 920,885 960,995 1000,1090 1040,1128 1080,1100 1120,1030 1170,950 1220,919 1260,920 1310,940 1360,970 1400,980 1440,960 1490,870 1530,790
F 0,765 20,780 50,860 80,980 120,1140 160,1260 195,1287 230,1260 280,1160 330,1065 370,1025 420,1028 470,1043 520,1032 580,980 640,955 700,932 740,925 780,935 830,975 875,989 920,965 970,905 1000,885 1020,888`;
S.cycRed = `D 172,845 200,920 240,1015 270,1055 300,1055 330,1030 370,1010 420,1010 460,1025 510,1032 560,1020 620,985 680,915 730,877 770,860 800,870 850,940 900,990 950,1015 990,1080 1030,1160 1070,1230 1100,1272 1125,1282 1155,1260 1190,1160 1230,1010 1270,920 1300,905 1330,910 1370,965 1420,1040 1450,1058
E 0,1050 30,1020 70,955 120,895 160,877 190,893 230,960 270,1030 310,1043 360,1015 400,985 430,978 470,1000 520,1100 560,1180 590,1205 620,1190 650,1130 680,1030 720,890 760,800 800,780 840,810 880,920 920,1060 950,1130 985,1148 1020,1130 1060,1030 1100,950 1140,915 1220,920 1260,938 1310,978 1350,995 1385,983 1420,915 1470,780 1500,733 1530,740
F 0,835 20,920 50,1060 80,1200 110,1290 145,1315 180,1275 220,1170 260,1080 300,1020 330,1005 370,1030 420,1052 460,1045 500,1000 540,963 600,958 640,932 680,915 720,930 760,950 790,995 820,1010 860,990 900,905 950,872 990,872 1005,905 1018,945`;
S.stoc = `D 172,1155 190,1010 210,900 235,790 245,750 255,731 415,731 455,750 495,770 530,808 545,828 560,838 600,838 635,828 650,805 660,778 668,768 680,785 695,835 705,855 715,865 730,865 740,855 760,800 770,755 778,731 1073,731 1100,775 1130,870 1160,1020 1190,1180 1205,1280 1215,1305 1228,1315 1465,1315
E 35,1300 60,1270 90,1260 130,1258 155,1230 180,1160 215,1115 245,1060 270,990 285,890 300,790 310,750 318,731 525,731 550,780 575,860 600,960 620,1090 640,1210 655,1290 675,1315 830,1312 855,1270 880,1230 905,1150 935,1080 960,1015 990,1000 1020,940 1050,840 1070,745 1085,730 1100,750 1145,840 1190,885 1230,948 1255,910 1280,865 1310,820 1330,765 1345,731
F 0,731 160,731 190,757 220,795 255,880 285,1010 305,1100 335,1230 345,1285 358,1315 620,1315 635,1305 680,1300 710,1270 740,1215 765,1150 790,1050 810,930 830,790 840,750 850,731 870,731 885,765 905,813 918,800 930,740 940,731 1125,731`;
S.pen = `B 626,1062 612,1105 598,1170 586,1280 E 584,100 584,808 | B 1223,1182 1219,1310 E 1213,95 1208,350 1215,550 1225,552 1243,537 | C 456,1000 454,1275 459,1310 F 466,95 478,185 492,320 498,430 498,620 |
E 575,476 605,465 1500,465 F 100,465 210,482 280,495 330,500 498,500 517,491 |
E 1018,88 1025,140 1026,238 | 1202,71 1102,80 | 1108,96 1085,118 1068,135 1085,150 1106,162 1128,178 1140,195 1147,215 1143,238 1128,243 1113,243 1100,230 1088,204 |
1424,50 1420,42 1395,36 1370,45 1345,62 1312,90 1312,130 1320,134 1390,134 1402,124 1401,226 1397,224 1395,185 |
F 0,43 20,30 50,30 51,45 42,58 E 1548,57 1533,68 1520,82 1514,100 1511,140 1517,160 1540,170 F 0,173 25,172 38,152 28,175 12,225 5,237 E 1565,237`;

// day separators
const days = [];
for (let x = 80; x <= 620; x += 54) days.push(x + .5);
for (let x = 668; x <= 1700; x += 54) days.push(x + .5);
for (const x of days) {
  const dash = { 'stroke-dasharray': '9 3 3 3 3 3', ...crisp };
  line(x, 109, x, 555, '#4c4c4c', dash);
  line(x, 577, x, 771, '#4c4c4c', dash);
  line(x, 793, x, 987, '#4c4c4c', dash);
}

// CCI histogram
const cci = parse(S.cci)[0];
let bars = '';
for (let x = 71; x <= 1730; x += 3) bars += `M${x + .5} 894.500V${f(yAt(cci, x))}`;
add('path', { d: bars, stroke: '#444', ...crisp });

// level lines
const levels = [[608.5, '#f00'], [648.5, '#6b6b00'], [729.5, '#6b6b00'], [666.5, '#800080'], [769.5, '#f00'], [841.5, '#808080'], [946.5, '#808080'], [884.5, '#800080']];
for (const [y, c] of levels) line(70, y, 1730, y, c, crisp);
line(70, 688.5, 1730, 688.5, '#0000ff', { 'stroke-dasharray': '3 3', ...crisp });
line(70, 411.5, 1838, 411.5, '#808000', { 'stroke-dasharray': '3 3', ...crisp });

// middle pane
curve(S.teal, '#008080', 1, crisp);
add('path', { d: straight(parse(S.leo)), stroke: '#0ff', fill: 'none', ...crisp });
curve(S.macdDash, '#ff0', 1, { 'stroke-dasharray': '4 3', ...crisp });
curve(S.macd, '#ff0', 1, crisp);

// lower pane
add('path', { d: straight(parse(S.stoc)), stroke: '#c86400', fill: 'none', 'stroke-dasharray': '3 3', ...crisp });
curve(S.cycRed, '#f00', 1, { 'stroke-dasharray': '3 4', ...crisp });
curve(S.cycBlue, '#00f', 1, crisp);
[['hi', 780, 62, '#f00'], ['mid', 842, 105, '#b0b0b0'], ['lo', 947, 43, '#0ff']].forEach(([id, y, h, c]) => {
  const clip = add('clipPath', { id });
  const r = document.createElementNS(NS, 'rect');
  for (const [k, v] of [['x', 0], ['y', y], ['width', 1920], ['height', h]]) r.setAttribute(k, v);
  clip.appendChild(r);
  add('path', { d: straight([cci]), stroke: c, fill: 'none', 'clip-path': `url(#${id})`, ...crisp });
});
const dot = (src, c) => { for (const [x, y] of parse(src)[0]) add('ellipse', { cx: f(x), cy: f(y), rx: 4, ry: 4, fill: c }); };
dot('D 454,747 1086,753 E 535,753 1101,756 F 183,747 881,753', '#0ff');
dot('E 35,1299 836,1302 F 668,1302', '#f00');

// price pane
curve(S.maBlue, '#00f', 2, crisp);
stepped(S.hiRed, '#f00');
stepped(S.lowGreen, '#0f0');
const price = parse(S.price);
add('path', { d: straight(price), stroke: '#6a6aff', fill: 'none', ...crisp });
curve(S.maYellow, '#ff0', 1, crisp);
add('path', { d: price[0].map(p => `M${Math.round(p[0]) - 2} ${Math.round(p[1]) - 1}h4v3h-4zM${Math.round(p[0]) - 1} ${Math.round(p[1]) - 2}h3v4h-3z`).join(''), fill: '#0ff', ...crisp });

for (const [x, y] of parse('A 373,585 609,610 B 1454,1125 C 944,925')[0])
  add('path', { d: `M${f(x - 1)} ${f(y + 7)}v-8h-3l4-5 4 5h-3v8z`, fill: '#0f0' });
for (const [x, y] of parse('A 536,585 1183,308 C 350,735')[0])
  add('path', { d: `M${f(x - 2)} ${f(y - 8)}v9h-3l5 7 5-7h-3v-9z`, fill: '#f00' });
for (const [x, y] of parse('A 365,514 600,562 B 1446,1066 C 938,880')[0]) add('path', { d: `M${f(x - 2)} ${f(y - 4)}v8l5-4z`, fill: '#0f0' });
for (const [x, y] of parse('A 527,674 1174,383 C 343,770')[0]) add('path', { d: `M${f(x - 2)} ${f(y - 4)}v8l5-4z`, fill: '#f00' });
parse('A 374,655 609,680 B 1455,1192 C 944,995')[0].forEach(([x, y]) => text(x, y, '1', '#fff', 16, 'middle'));
parse('A 535,532 1181,255 C 349,682')[0].forEach(([x, y]) => text(x, y, '-1', '#fff', 16, 'middle'));

add('path', { d: straight(parse(S.pen)), stroke: '#f00', 'stroke-width': 2, fill: 'none', ...crisp });

// frame and ticks
line(69.5, 90, 69.5, 990, '#f00', crisp);
line(1840.5, 90, 1840.5, 990, '#f00', crisp);
line(2, 558.5, 70, 558.5, '#f00', crisp);
line(1839, 558.5, 1918, 558.5, '#f00', crisp);
line(2, 774.5, 70, 774.5, '#f00', crisp);
line(2, 990.5, 1918, 990.5, '#f00', crisp);
const tick = y => { line(63, y + .5, 69, y + .5, '#f00', crisp); };
const tickR = y => { line(1841, y + .5, 1847, y + .5, '#f00', crisp); };
for (let y = 157; y <= 541; y += 48) { tick(y); tickR(y); }
[588, 608, 628, 648, 668, 688, 709, 729, 749].forEach(y => { tick(y); tickR(y); });
[811, 835, 909, 933, 958].forEach(tick);
[807, 828, 872, 894, 915, 960].forEach(tickR);
[101, 308, 377].forEach(x => line(x + .5, 991, x + .5, 995, '#f00', crisp));
for (let x = 446; x <= 1830; x += 69) line(x + .5, 991, x + .5, 995, '#f00', crisp);
line(134.5, 991, 134.5, 1001, '#f00', crisp);

['3,650', '3,600', '3,550', '3,500', '3,450', '3,400', '3,350', '3,300'].forEach((t, i) => {
  text(59, 165 + i * 48, t, '#fff', 20, 'end');
  if (t !== '3,350') text(1848, 165 + i * 48, t, '#fff');
});
[[596, '10.00'], [636, '6.00'], [676, '2.00'], [717, '-2.00'], [757, '-6.00']].forEach(([y, t]) => {
  text(59, y, t, '#fff', 20, 'end');
  text(1848, y, t, '#fff');
});
[[819, '60.00'], [917, '-20....'], [966, '-60....']].forEach(([y, t]) => text(59, y, t, '#fff', 20, 'end'));
[[836, '150.00'], [880, '50.00'], [923, '-50.00'], [967, '-150.00']].forEach(([y, t]) => text(1848, y, t, '#fff'));

const tag = (x, y, h, fill, t, base, end) => {
  add('rect', { x, y, width: end ? 67 : 77, height: h, fill });
  if (t) text(end ? 60 : x + 8, base, t, '#000', 20, end ? 'end' : 'start');
};
tag(2, 837, 19, '#00f', '31.53', 856, true);
tag(2, 879, 19, '#800080', '0.00', 894, true);
tag(2, 856, 23, '#f00', '16.08', 875, true);
tag(1841, 359, 23, '#6666ff', '3,430', 378);
tag(1841, 399, 22, '#00f', '3,389', 418);
tag(1841, 421, 20, '#ff0', '3,365', 439);
tag(1841, 437, 23, '#0f0', '3,350', 456);
tag(1841, 599, 23, '#f00', '8.00', 618);
tag(1841, 639, 4, '#6b6b00');
tag(1841, 642, 23, '#0ff', '3.74', 661);
tag(1841, 679, 23, '#00f', '0.00', 698);
tag(1841, 720, 23, '#6b6b00', '-4.00', 739);
tag(1841, 760, 23, '#f00', '-8.00', 779);
tag(1841, 832, 20, '#808080', '120.00', 850);
tag(1841, 848, 23, '#a4a4a4', '84.14', 867);
tag(1841, 937, 23, '#808080', '-120.00', 956);
text(1755, 407, '3386.000', '#808000');

// legends
const legend = (y, items) => items.forEach(([x, t, c]) => text(x, y, t, c, 16));
legend(106, [[71, 'GS:STOXX50-DT - 30 min', '#6a6aff'], [277, 'EUREX', '#6a6aff'], [342, '10/17/2022', '#fff'], [432, 'L=3430.000', '#0f0'], [528, 'Hi=3431.000', '#fff'], [630, 'Lo=3365.000', '#fff'], [735, 'C=3430.000', '#0f0'], [834, 'Close', '#fff'], [893, '3430.000', '#0ff'], [970, 'HILOW Alert', '#fff'], [1080, '3349.687', '#0f0'], [1157, 'Strategy', '#fff'], [1235, 'Media mobile no lag', '#fff'], [1407, '3388.769', '#00f']]);
legend(574, [[71, 'Macd ciclico 2', '#fff'], [222, '0.00', '#800080'], [263, 'Leo Chart', '#fff'], [353, '3.74', '#0ff'], [394, '8.00', '#f00'], [435, '-8.00', '#f00'], [482, '4.00', '#6b6b00'], [523, '-4.00', '#6b6b00'], [569, '0.00', '#00f']]);
legend(790, [[71, 'CCI Smothing ekam', '#fff'], [235, '84.14', '#a4a4a4'], [286, '120.00', '#808080'], [344, '-120.00', '#808080'], [409, '84.14', '#444'], [459, 'Stoc colore', '#fff'], [579, '1.00', '#c86400'], [619, 'Macd Ciclico', '#fff'], [750, '0.00', '#800080']]);

// dates
[[141, '9/06'], [195, '9/07'], [249, '9/08'], [315, '9/09'], [384, '9/12'], [453, '9/13'], [522, '9/15'], [591, '9/16'], [660, '9/19'], [729, '9/21'], [798, '9/22'], [867, '9/23'], [936, '9/26'], [1005, '9/28'], [1074, '9/29'], [1143, '9/30'], [1207, '10/03'], [1276, '10/05'], [1345, '10/06'], [1414, '10/07'], [1483, '10/11'], [1552, '10/12'], [1621, '10/13'], [1690, '10/14'], [1759, '10/18']].forEach(([x, t]) => text(x, 1014, t, '#fff'));

// window edges
add('rect', { x: 0, y: 90, width: 2, height: 928, fill: '#808080' });
add('rect', { x: 1918, y: 90, width: 2, height: 928, fill: '#e8e8e8' });
```
